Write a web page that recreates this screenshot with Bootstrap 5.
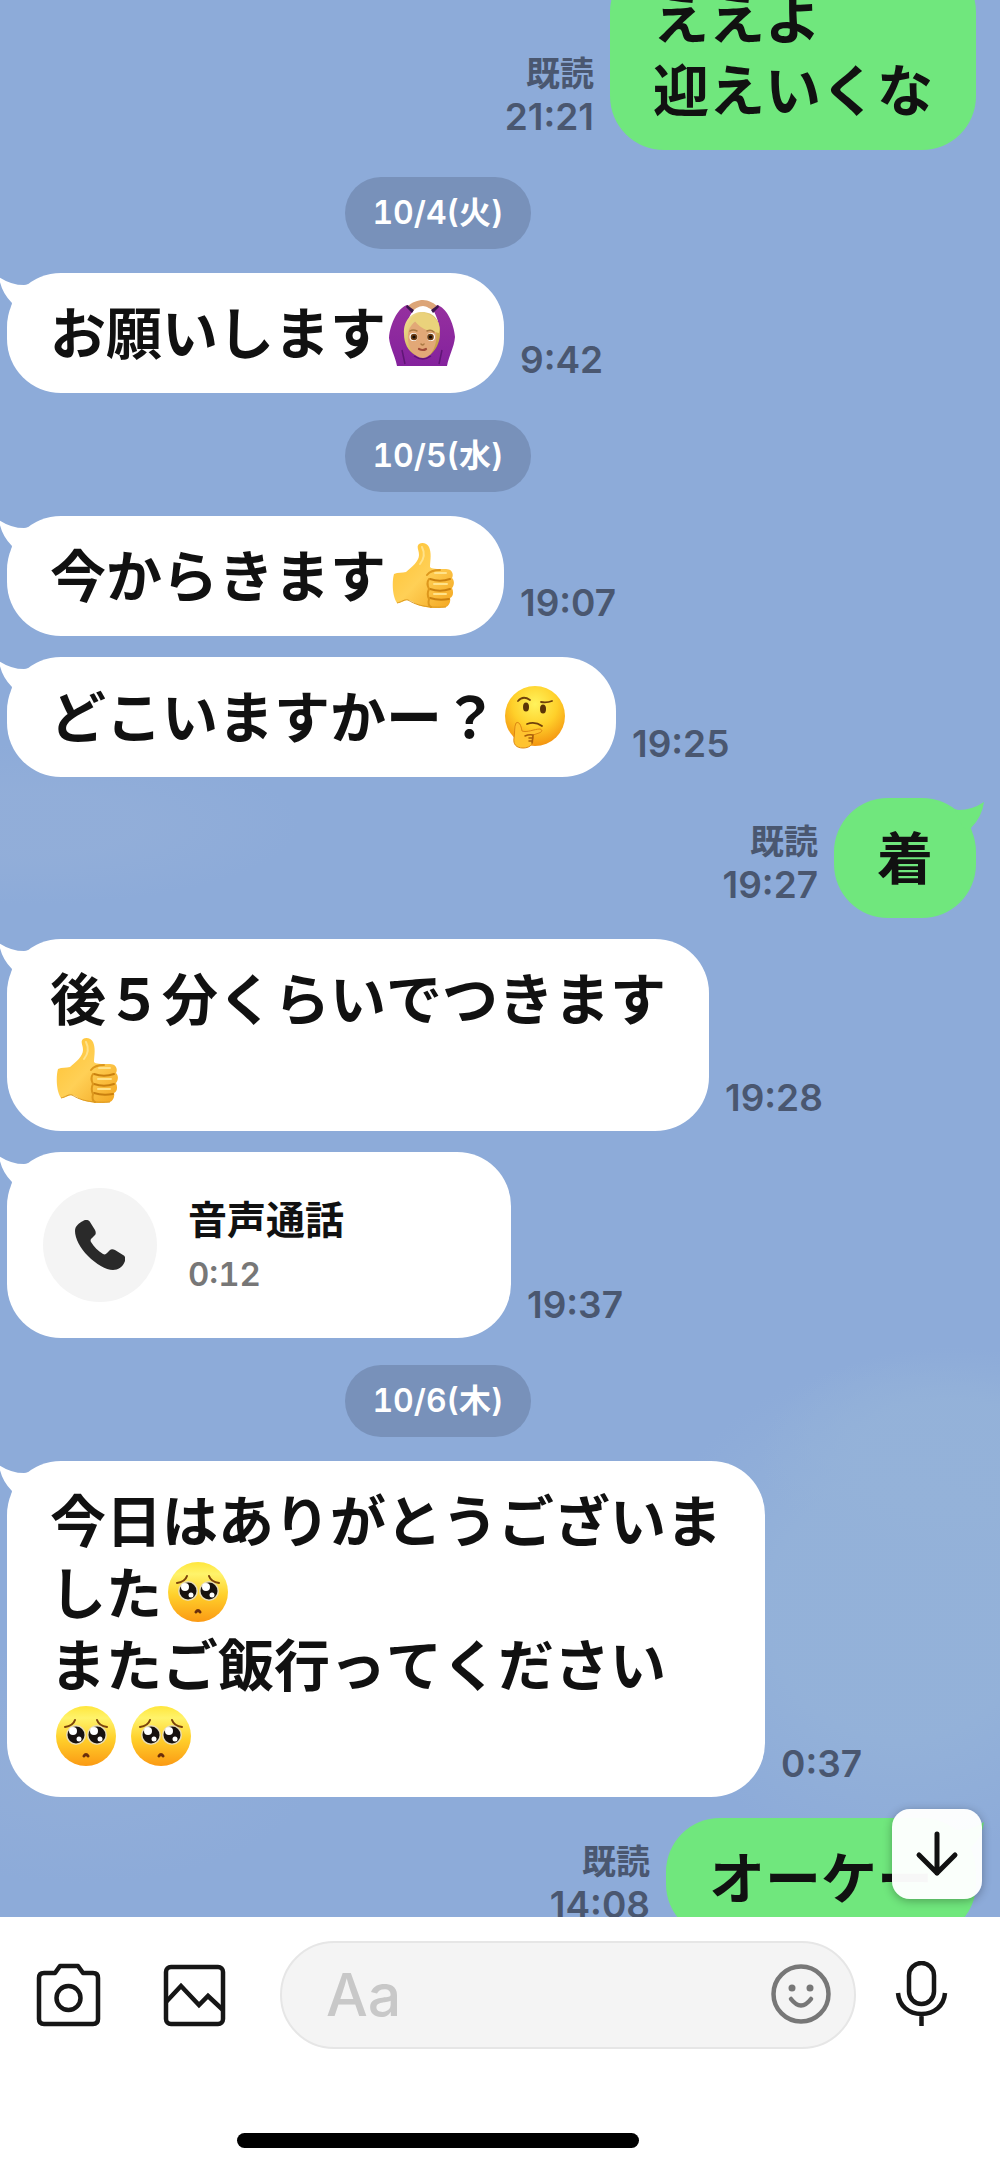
<!DOCTYPE html>
<html lang="ja">
<head>
<meta charset="utf-8">
<meta name="viewport" content="width=device-width, initial-scale=1">
<title>トーク</title>
<link href="https://cdn.jsdelivr.net/npm/bootstrap@5.3.0/dist/css/bootstrap.min.css" rel="stylesheet">
<style>
:root{--ink:#111;--line-green:#70e77d;--meta:#4a5770}
body{font-family:Inter,"Noto Sans CJK JP",sans-serif;color:var(--ink)}
.talk{background:
 radial-gradient(ellipse 190px 110px at 95% 76%,rgba(148,178,217,.9) 50%,rgba(148,178,217,0)),
 radial-gradient(ellipse 260px 250px at 90% 84%,rgba(148,178,217,.9) 50%,rgba(148,178,217,0)),
 radial-gradient(ellipse 270px 80px at 3% 43%,rgba(146,174,217,.9) 40%,rgba(146,174,217,0)),
 radial-gradient(ellipse 240px 120px at 8% 92%,rgba(146,174,217,.8) 30%,rgba(146,174,217,0)),
 #8dabd9}
.talk-log{gap:21px;margin-top:-42px}
.turn{gap:16px}
.turn.sent{padding-right:24px}
.turn.got{padding-left:7px}
.bubble{position:relative;background:#fff;border-radius:54px;padding:25px 43px 23px;font-size:56px;line-height:72px;font-weight:600;font-kerning:none;white-space:nowrap}
.sent .bubble{background:var(--line-green)}
.tail{position:absolute;top:4px;width:30px;height:32px}
.sent .tail{right:-8px;fill:var(--line-green)}
.got .tail{left:-8px;fill:#fff;transform:scaleX(-1)}
.stamp{font-size:37px;line-height:43px;font-weight:600;color:var(--meta);padding-bottom:12px}
.seen{font-size:34px}
.day-row{padding:6px 124px 3px 0}
.day{background:#7891ba;color:#fff;font-size:32px;line-height:72px;font-weight:600;font-variant-numeric:tabular-nums;border-radius:36px;width:186px}
.emo{width:75px;height:66px;margin:-12px 0;vertical-align:0}
.call{padding:36px;width:504px;gap:31px}
.call-dot{width:114px;height:114px;background:#f4f4f4}
.call-text{padding-top:4px}
.call-name{font-size:39px;line-height:54px;font-weight:700}
.call-len{font-size:33px;line-height:54px;font-weight:600;font-variant-numeric:tabular-nums;color:#777}
.to-end{position:absolute;right:18px;bottom:18px;width:90px;height:90px;border-radius:18px;background:rgba(255,255,255,.97);box-shadow:0 2px 10px rgba(0,0,0,.3)}
.composer{padding:24px 51px 0 36px}
.tool{border:0;background:none;padding:0;line-height:0;flex-shrink:0}
.entry{height:108px;min-width:0;border-radius:54px;background:#f4f4f4;border:2px solid #e6e6e6;padding:0 22px 0 44px;margin:0 33px 0 40px}
.entry input{border:0;background:none;outline:0;font-size:59px;font-weight:500;color:var(--ink);min-width:0;width:0}
.entry input::placeholder{color:#c8c8c8;opacity:1}
.home-row{padding:84px 124px 24px 0}
.home-bar{width:402px;height:15px;background:#000;border-radius:8px}
</style>
<script src="https://cdn.jsdelivr.net/npm/bootstrap@5.3.0/dist/js/bootstrap.bundle.min.js"></script>
</head>
<body class="d-flex flex-column vh-100 overflow-hidden bg-white">
<svg width="0" height="0" class="position-absolute" aria-hidden="true">
 <defs>
  <radialGradient id="gFace" cx=".5" cy=".3" r=".75"><stop offset="0" stop-color="#fff35c"/><stop offset=".5" stop-color="#ffd02a"/><stop offset="1" stop-color="#f28a0c"/></radialGradient>
  <linearGradient id="gPlead" x1="0" y1="0" x2="0" y2="1"><stop offset="0" stop-color="#ffe63c"/><stop offset=".2" stop-color="#fff36b"/><stop offset=".55" stop-color="#ffd02b"/><stop offset="1" stop-color="#fb9a14"/></linearGradient>
  <linearGradient id="gHand" x1="0" y1="0" x2="1" y2="1"><stop offset="0" stop-color="#ffc12f"/><stop offset=".5" stop-color="#ffd056"/><stop offset="1" stop-color="#f3a51f"/></linearGradient>
  <linearGradient id="gTop" x1="0" y1="0" x2="0" y2="1"><stop offset="0" stop-color="#96309f"/><stop offset="1" stop-color="#84229d"/></linearGradient>
  <linearGradient id="gHair" x1="0" y1="0" x2="1" y2="1"><stop offset="0" stop-color="#f4e59a"/><stop offset="1" stop-color="#bf9435"/></linearGradient>
  <symbol id="tail" viewBox="0 0 30 32"><path d="M1 7 Q3 8 5 8 Q18 8 30 0 Q28 15 17 26 L18 32 L8 24Z"/></symbol>
  <symbol id="thumb" viewBox="0 0 75 66">
   <path fill="url(#gHand)" d="M33 1C36-1 41 0 43 4C46 11 44 18 44 24C46 26 50 26 60 26C66 26 68 31 66 35C69 38 68 43 66 45C68 49 67 54 64 55C65 59 63 63 60 64C53 66 42 65 35 63C28 61 26 57 21 57C17 58 15 60 11 60C6 53 6 38 8 31C12 29 16 30 20 29C26 24 33 18 33 12C33 7 30 4 33 1Z"/>
   <path fill="none" stroke="#c9800f" stroke-width="2" stroke-linecap="round" d="M64 36C58 38 50 38 44 36M64 46C58 48 50 48 44 46M63 56C57 57 50 57 44 55"/>
   <path fill="none" stroke="#dd971c" stroke-width="2" stroke-linecap="round" d="M41 32C44 28 48 27 54 27M43 36C40 40 42 44 43 46C41 50 42 54 43 56C42 60 43 63 45 64"/>
   <path fill="none" stroke="#ffe28a" stroke-width="2" stroke-linecap="round" d="M36 4C39 10 38 16 34 21M49 30H60M48 41H61M48 51H60"/>
   <path fill="none" stroke="#dc9a22" stroke-width="1" d="M11 60C16 59 18 56 22 57C29 61 36 65 60 64"/>
  </symbol>
  <symbol id="think" viewBox="0 0 75 66">
   <circle cx="37" cy="32" r="30" fill="url(#gFace)"/>
   <ellipse cx="28" cy="23" rx="3" ry="4.500" fill="#5c3407"/><ellipse cx="45" cy="25" rx="3" ry="4.500" fill="#5c3407"/>
   <path fill="none" stroke="#70410b" stroke-width="1.800" stroke-linecap="round" d="M20 17Q25 11 32 16M43 18Q49 19 54 17M29 40Q37 37 44 42"/>
   <path fill="#ffc32f" stroke="#dd8813" stroke-width="1" d="M18 39C21 37 23 41 24 47C29 49 36 45 42 45C45 46 44 48 41 49L35 51C36 53 35 54 35 56C35 61 31 64 25 64C18 64 15 60 16 54C17 49 16 43 18 39Z"/>
   <path fill="none" stroke="#a85d0c" stroke-width="1.500" stroke-linecap="round" d="M27 52Q31 50 35 51L34 59M31 54L35 54M31 57L34 57"/>
  </symbol>
  <symbol id="plead" viewBox="0 0 75 66">
   <circle cx="36" cy="32" r="30" fill="url(#gPlead)"/>
   <circle cx="26" cy="31" r="10" fill="#e9dcb4"/><circle cx="47" cy="31" r="10" fill="#e9dcb4"/>
   <circle cx="26" cy="31" r="8.500" fill="#17110f"/><circle cx="47" cy="31" r="8.500" fill="#17110f"/>
   <circle cx="23" cy="27" r="4" fill="#fff"/><circle cx="44" cy="27" r="4" fill="#fff"/>
   <circle cx="29" cy="35" r="2.500" fill="#fff"/><circle cx="50" cy="35" r="2.500" fill="#fff"/>
   <path fill="none" stroke="#7b430b" stroke-width="2" stroke-linecap="round" d="M15 23Q23 22 25 16M57 23Q49 22 47 16"/>
   <path fill="none" stroke="#6a2e0c" stroke-width="3" stroke-linecap="round" d="M34 52Q36 49 38 52"/>
  </symbol>
  <symbol id="arms" viewBox="0 0 75 66">
   <path fill="#dca578" d="M21 7C26 2 32 0 37 0C42 0 49 3 53 8L49 12C45 9 40 6 37 6C33 6 28 9 25 13Z"/>
   <path fill="url(#gTop)" d="M22 5C13 6 4 23 3 38C4 48 9 55 11 66H61C63 55 68 48 69 37C68 23 60 7 51 5L47 10C52 18 57 33 50 44H22C17 32 22 17 27 11Z"/>
   <path fill="#3a174b" d="M21 5L28 10L26 13L20 7ZM52 5L45 10L47 13L53 7Z"/>
   <path fill="url(#gHair)" d="M18 34C17 20 26 12 36 12C48 12 55 21 54 34C54 43 49 51 44 55H29C22 51 18 43 18 34Z"/>
   <path fill="#e2a877" d="M22 35C22 28 27 23 30 21C36 28 43 31 50 32C52 43 46 58 37 58C28 58 21 46 22 35Z"/>
   <path fill="#ead27b" d="M22 26C24 15 34 11 42 14C51 17 55 25 53 33C45 31 36 31 28 20Z"/>
   <circle cx="27.500" cy="37" r="4" fill="#fff"/><circle cx="45" cy="37" r="4" fill="#fff"/>
   <circle cx="28" cy="37" r="3.300" fill="#6b3d14"/><circle cx="44.500" cy="37" r="3.300" fill="#6b3d14"/>
   <circle cx="28" cy="37" r="1.600" fill="#120a05"/><circle cx="44.500" cy="37" r="1.600" fill="#120a05"/>
   <path fill="none" stroke="#a87842" stroke-width="1.500" stroke-linecap="round" d="M24 31Q27 29 31 31M41 31Q45 29 48 32M35 44Q37 46 38 44"/>
   <path fill="none" stroke="#a04c38" stroke-width="2.200" stroke-linecap="round" d="M33 49Q37 51 40 49"/>
   <path fill="none" stroke="#5f1675" stroke-width="1.500" d="M16 50L19 64M56 50L53 64M28 56Q37 62 45 56"/>
  </symbol>
 </defs>
</svg>

<main class="talk position-relative flex-grow-1 overflow-hidden">
 <div class="talk-log d-flex flex-column">
  <div class="turn sent d-flex justify-content-end align-items-end">
   <div class="stamp text-end"><div class="seen">既読</div><time>21:21</time></div>
   <div class="bubble">ええよ<br>迎えいくな</div>
  </div>

  <div class="day-row d-flex justify-content-center"><div class="day text-center">10/4(火)</div></div>

  <div class="turn got d-flex align-items-end">
   <div class="bubble"><svg class="tail" aria-hidden="true"><use href="#tail"/></svg>お願いします<svg class="emo" role="img" aria-label="両手で丸"><use href="#arms"/></svg></div>
   <time class="stamp">9:42</time>
  </div>

  <div class="day-row d-flex justify-content-center"><div class="day text-center">10/5(水)</div></div>

  <div class="turn got d-flex align-items-end">
   <div class="bubble"><svg class="tail" aria-hidden="true"><use href="#tail"/></svg>今からきます<svg class="emo" role="img" aria-label="いいね"><use href="#thumb"/></svg></div>
   <time class="stamp">19:07</time>
  </div>
  <div class="turn got d-flex align-items-end">
   <div class="bubble"><svg class="tail" aria-hidden="true"><use href="#tail"/></svg>どこいますかー？<svg class="emo" role="img" aria-label="考え中"><use href="#think"/></svg></div>
   <time class="stamp">19:25</time>
  </div>
  <div class="turn sent d-flex justify-content-end align-items-end">
   <div class="stamp text-end"><div class="seen">既読</div><time>19:27</time></div>
   <div class="bubble"><svg class="tail" aria-hidden="true"><use href="#tail"/></svg>着</div>
  </div>
  <div class="turn got d-flex align-items-end">
   <div class="bubble"><svg class="tail" aria-hidden="true"><use href="#tail"/></svg>後５分くらいでつきます<br><svg class="emo" role="img" aria-label="いいね"><use href="#thumb"/></svg></div>
   <time class="stamp">19:28</time>
  </div>
  <div class="turn got d-flex align-items-end">
   <div class="bubble call d-flex align-items-center"><svg class="tail" aria-hidden="true"><use href="#tail"/></svg>
    <div class="call-dot rounded-circle d-flex align-items-center justify-content-center">
     <svg width="50" height="50" viewBox="0 0 50 50" aria-hidden="true"><path fill="#2a2a2a" d="M8 1C11-1 14 0 15 2L20 10C21 12 21 14 20 15L17 18C16 19 15 20 16 22C19 27 23 31 28 34C30 35 31 34 32 33L35 30C36 29 38 29 40 30L48 35C50 36 51 38 50 41C48 47 43 50 38 50C31 50 21 44 13 36C5 28 0 18 0 11C0 6 4 3 8 1Z"/></svg>
    </div>
    <div class="call-text"><div class="call-name">音声通話</div><div class="call-len">0:12</div></div>
   </div>
   <time class="stamp">19:37</time>
  </div>

  <div class="day-row d-flex justify-content-center"><div class="day text-center">10/6(木)</div></div>

  <div class="turn got d-flex align-items-end">
   <div class="bubble"><svg class="tail" aria-hidden="true"><use href="#tail"/></svg>今日はありがとうございま<br>した<svg class="emo" role="img" aria-label="うるうる"><use href="#plead"/></svg><br>またご飯行ってください<br><svg class="emo" role="img" aria-label="うるうる"><use href="#plead"/></svg><svg class="emo" role="img" aria-label="うるうる"><use href="#plead"/></svg></div>
   <time class="stamp">0:37</time>
  </div>
  <div class="turn sent d-flex justify-content-end align-items-end">
   <div class="stamp text-end"><div class="seen">既読</div><time>14:08</time></div>
   <div class="bubble"><svg class="tail" aria-hidden="true"><use href="#tail"/></svg>オーケー</div>
  </div>
 </div>
 <button type="button" class="to-end border-0 p-0 d-flex align-items-center justify-content-center" aria-label="最新のメッセージへ">
  <svg width="44" height="46" viewBox="0 0 44 46" fill="none" stroke="#111" stroke-width="5" stroke-linecap="round" stroke-linejoin="round" aria-hidden="true"><path d="M22 3V42M4 24L22 42L40 24"/></svg>
 </button>
</main>

<footer class="bg-white flex-shrink-0">
 <form class="composer d-flex align-items-center">
  <button type="button" class="tool" aria-label="カメラ"><svg width="66" height="66" viewBox="0 0 66 66" fill="none" stroke="#161616" stroke-width="4.500" stroke-linejoin="round"><path d="M8 11H19L24 4H42L47 11H57Q62 11 62 16V57Q62 62 57 62H8Q3 62 3 57V16Q3 11 8 11Z"/><circle cx="32.500" cy="36" r="12"/></svg></button>
  <button type="button" class="tool ms-5" aria-label="写真"><svg width="90" height="66" viewBox="0 0 90 66" fill="none" stroke="#161616" stroke-width="4.500"><rect x="16" y="5" width="57" height="57" rx="5"/><path d="M16 40L31 24L49 43L58 34L73 48"/></svg></button>
  <label class="entry flex-grow-1 d-flex align-items-center">
   <input type="text" class="flex-grow-1 p-0" placeholder="Aa" aria-label="メッセージを入力">
   <button type="button" class="tool" aria-label="スタンプ"><svg width="62" height="62" viewBox="0 0 62 62" fill="none" stroke="#777" stroke-width="4.500" stroke-linecap="round"><circle cx="31" cy="30" r="27.500"/><path d="M21 35Q31 48 41 35"/><g fill="#777" stroke="none"><circle cx="22" cy="24" r="3.500"/><circle cx="40" cy="24" r="3.500"/></g></svg></button>
  </label>
  <button type="button" class="tool" aria-label="音声入力"><svg width="60" height="68" viewBox="0 0 60 68" fill="none" stroke="#161616" stroke-width="4.500"><rect x="20" y="2" width="25" height="41" rx="12.500"/><path d="M9 32C10 45 20 53 32.500 53S55 45 56 32M32.500 53V65"/></svg></button>
 </form>
 <div class="home-row d-flex justify-content-center"><div class="home-bar"></div></div>
</footer>
</body>
</html>
